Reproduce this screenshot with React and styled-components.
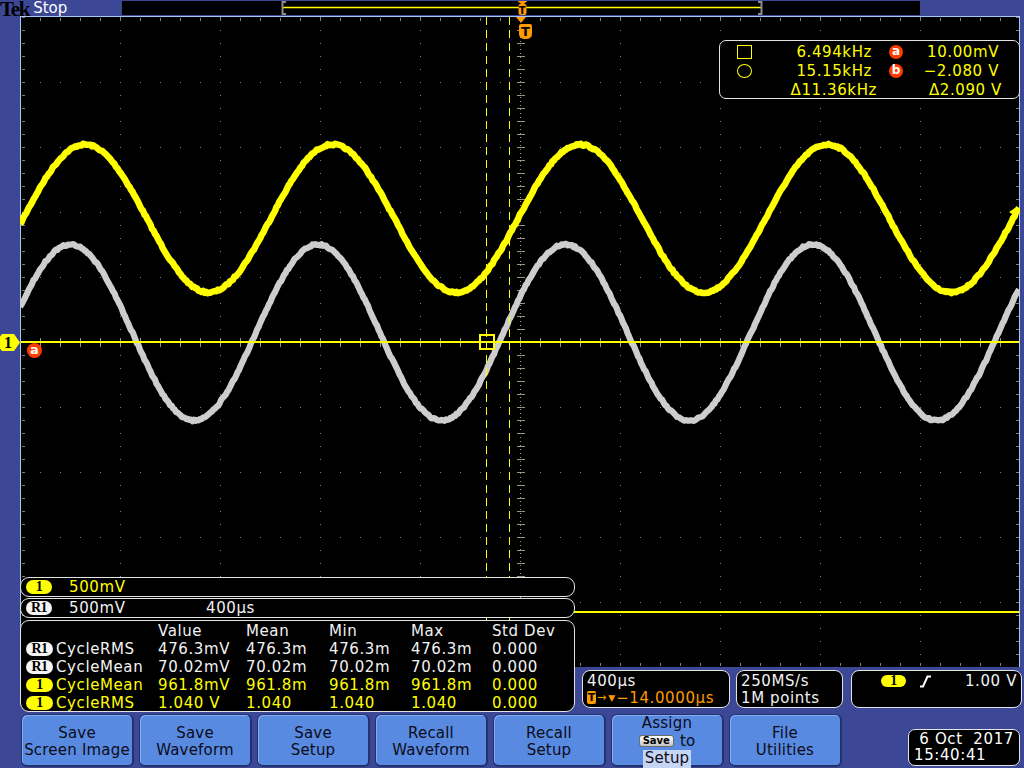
import React from 'react';
import styled, { createGlobalStyle } from 'styled-components';

const C = {
  bg: '#3c4896',
  frame: '#a8c8f4',
  yellow: '#ffff00',
  orange: '#ff9a00',
  red: '#ff3c00',
  white: '#f2f2f2',
  border: '#e4e4e4',
  btn: '#588ae2',
  grid: '#808080',
  axis: '#9b927e',
};

const GlobalStyle = createGlobalStyle`
  html, body { margin: 0; padding: 0; background: ${C.bg}; }
  body { width: 1024px; height: 768px; overflow: hidden; }
  *, *::before, *::after { box-sizing: border-box; }
`;

const Scope = styled.div`
  position: relative;
  width: 1024px;
  height: 768px;
  background: ${C.bg};
  display: grid;
  grid-template-columns: 20px 1000px 4px;
  grid-template-rows: 16px 561px 90px 46px 55px;
  font-family: "DejaVu Sans", Verdana, sans-serif;
  font-size: 15px;
  letter-spacing: 0.6px;
  color: ${C.white};
`;

/* ---------- top bar ---------- */
const TopBar = styled.header`
  grid-column: 1 / -1;
  grid-row: 1;
  display: flex;
  align-items: flex-start;
`;
const Brand = styled.div`
  width: 122px;
  height: 16px;
  display: flex;
  align-items: flex-end;
  gap: 4px;
`;
const TekLogo = styled.span`
  display: block;
  font-family: "Liberation Serif", "DejaVu Serif", serif;
  font-weight: 700;
  font-size: 21px;
  letter-spacing: -1.3px;
  color: #000;
  line-height: 16px;
  height: 16px;
  padding-top: 1px;
`;
const RunState = styled.span`
  display: block;
  color: #fff;
  font-size: 15px;
  letter-spacing: 0;
  line-height: 16px;
`;
const RecordView = styled.div`
  width: 798px;
  height: 14px;
  margin-top: 1px;
  background: #000;
  svg { display: block; }
`;

/* ---------- graticule ---------- */
const GraticuleCell = styled.div`
  grid-column: 2;
  grid-row: 2 / 4;
  background: #000;
  svg { display: block; }
`;

/* ---------- cursor readout ---------- */
const Readout = styled.div`
  grid-column: 2;
  grid-row: 2;
  justify-self: end;
  align-self: start;
  margin-top: 24px;
  width: 301px;
  height: 59px;
  background: #000;
  border: 1px solid ${C.border};
  border-radius: 7px;
  padding: 1px 0 0 17px;
  display: grid;
  grid-template-columns: 16px 119px 17px 15px 95px;
  grid-auto-rows: 19px;
  align-items: center;
  color: ${C.yellow};
  white-space: nowrap;
`;
const ReadVal = styled.span`
  text-align: right;
  margin-right: ${p => p.$nudge || 0}px;
`;
const SquareSym = styled.span`
  display: block;
  width: 15px;
  height: 14px;
  border: 1.5px solid ${C.yellow};
`;
const CircleSym = styled.span`
  display: block;
  width: 15px;
  height: 14px;
  border: 1.5px solid ${C.yellow};
  border-radius: 50%;
`;
const CursorBadge = styled.span`
  display: flex;
  align-items: center;
  justify-content: center;
  width: 14px;
  height: 14px;
  border-radius: 50%;
  background: ${C.red};
  color: #fff;
  font-weight: 700;
  font-size: 12px;
  letter-spacing: 0;
  line-height: 14px;
  padding-bottom: 1px;
`;

/* ---------- lower left panels ---------- */
const LowerLeft = styled.div`
  grid-column: 2;
  grid-row: 3 / 5;
  width: 555px;
  display: flex;
  flex-direction: column;
  position: relative;
`;
const ChannelBar = styled.div`
  height: 20px;
  background: #000;
  border: 1px solid ${C.border};
  border-radius: 9px;
  display: flex;
  align-items: center;
  padding-left: 5px;
  color: ${p => p.$color};
  & + & { margin-top: 1px; }
`;
const ChanBadge = styled.span`
  flex: none;
  display: inline-flex;
  align-items: center;
  justify-content: center;
  width: ${p => p.$w || 26}px;
  height: ${p => p.$h || 14}px;
  border-radius: 7px;
  background: ${p => (p.$ref ? '#f4f4f4' : C.yellow)};
  color: #000;
  font-family: "Liberation Serif", "DejaVu Serif", serif;
  font-weight: 700;
  font-size: 14px;
  letter-spacing: -0.5px;
  line-height: 14px;
`;
const BarValue = styled.span`
  width: ${p => p.$w}px;
  margin-left: ${p => p.$ml || 0}px;
  flex: none;
`;
const MeasTable = styled.div`
  margin-top: 2px;
  height: 92px;
  background: #000;
  border: 1px solid ${C.border};
  border-radius: 9px;
  padding: 1px 0 0 5px;
  display: grid;
  grid-template-columns: 132px 88px 83px 82px 81px 1fr;
  grid-auto-rows: 18px;
  align-items: center;
  white-space: nowrap;
`;
const Cell = styled.div`
  color: ${p => p.$color || C.white};
  display: flex;
  align-items: center;
  gap: 3px;
`;

/* ---------- status boxes ---------- */
const StatusRow = styled.div`
  grid-column: 2 / 4;
  grid-row: 4;
  justify-self: end;
  display: flex;
  gap: 6px;
  padding: 3px 2px 0 0;
`;
const StatusBox = styled.div`
  width: ${p => p.$w}px;
  height: 38px;
  margin-left: ${p => p.$ml || 0}px;
  background: #000;
  border: 1px solid ${C.border};
  border-radius: 8px;
  padding: 2px 4px 0 4px;
  line-height: 16.5px;
  white-space: nowrap;
`;
const StatusLine = styled.div`
  display: flex;
  align-items: center;
  height: 16.5px;
  color: ${p => p.$color || C.white};
  padding-left: ${p => p.$pl || 0}px;
`;
const TrigT = styled.span`
  display: inline-flex;
  align-items: center;
  justify-content: center;
  width: 9px;
  height: 13px;
  border-radius: 2px;
  background: ${C.orange};
  color: #000;
  font-weight: 700;
  font-size: 11px;
  letter-spacing: 0;
`;
const SmallGlyph = styled.span`
  font-size: ${p => p.$size}px;
  letter-spacing: 0;
  margin: 0 1px;
`;
const PushRight = styled.span`
  margin-left: auto;
`;
const EdgeIcon = styled.svg`
  margin-left: 13px;
  flex: none;
`;

/* ---------- soft keys ---------- */
const SoftKeys = styled.div`
  grid-column: 1 / -1;
  grid-row: 5;
  display: flex;
  align-items: flex-start;
  gap: 5px;
  padding: 1px 4px 0 21px;
`;
const SoftKey = styled.div`
  width: 113px;
  height: 53px;
  flex: none;
  background: ${C.btn};
  border: 1px solid #22326e;
  border-right-width: 2px;
  border-bottom-width: 2px;
  border-radius: 6px;
  box-shadow: inset 1px 1px 0 #86acf0;
  display: flex;
  flex-direction: column;
  align-items: center;
  justify-content: center;
  padding-top: ${p => (p.$three ? 3 : 4)}px;
  color: #0c0c16;
  font-size: 15px;
  letter-spacing: 0.2px;
  line-height: 17.5px;
  text-align: center;
  white-space: nowrap;
`;
const SaveChip = styled.span`
  display: inline-block;
  height: 12px;
  padding: 0 3px;
  margin-right: 6px;
  border: 1px solid #6d6d6d;
  border-radius: 3px;
  background: linear-gradient(#ffffff, #c4c4c4);
  color: #000;
  font-size: 10px;
  font-weight: 700;
  line-height: 10px;
  letter-spacing: 0;
  vertical-align: 2px;
`;
const Highlight = styled.span`
  background: #c6d5f4;
  padding: 0 2px;
`;
const DateBox = styled.div`
  margin-left: auto;
  margin-top: 15px;
  width: 112px;
  height: 37px;
  background: #000;
  border: 1px solid ${C.border};
  border-radius: 7px;
  padding: 1px 0 0 5px;
  color: #fff;
  line-height: 16px;
  white-space: pre;
`;

/* ---------- overlays on graticule ---------- */
const ChannelMarker = styled.div`
  position: absolute;
  left: 0;
  top: 334px;
  width: 20px;
  height: 17px;
  background: ${C.yellow};
  clip-path: polygon(2px 0, 14px 0, 20px 50%, 14px 100%, 2px 100%, 0 85%, 0 15%);
  color: #000;
  font-family: "Liberation Serif", serif;
  font-weight: 700;
  font-size: 16px;
  line-height: 17px;
  padding-left: 4px;
  letter-spacing: 0;
`;
const CursorTag = styled.div`
  position: absolute;
  left: 27px;
  top: 343px;
  width: 15px;
  height: 15px;
  border-radius: 50%;
  background: ${C.red};
  color: #fff;
  font-weight: 700;
  font-size: 13px;
  line-height: 14px;
  text-align: center;
  letter-spacing: 0;
`;
const TriggerMark = styled.div`
  position: absolute;
  left: 516px;
  top: 17px;
  display: flex;
  flex-direction: column;
  align-items: flex-start;
`;
const TriggerArrow = styled.span`
  width: 0;
  height: 0;
  border-left: 5.5px solid transparent;
  border-right: 5.5px solid transparent;
  border-top: 6px solid ${C.orange};
`;
const TriggerBadge = styled.span`
  margin-top: 1px;
  margin-left: 3px;
  width: 13px;
  height: 15px;
  border-radius: 2px 2px 5px 5px;
  background: ${C.orange};
  color: #000;
  font-weight: 700;
  font-size: 13px;
  line-height: 15px;
  text-align: center;
  letter-spacing: 0;
`;

/* ---------- drawing helpers ---------- */
function wave(cy, amp, peakX, period, seed) {
  let s = seed;
  const rnd = () => {
    s = (s * 16807) % 2147483647;
    return s / 2147483647;
  };
  let d = '';
  for (let x = 0; x <= 1000; x += 1.5) {
    const y = cy - amp * Math.cos((2 * Math.PI * (x - peakX)) / period) + (rnd() - 0.5) * 1.8;
    d += (x === 0 ? 'M' : 'L') + x.toFixed(1) + ' ' + y.toFixed(2);
  }
  return d;
}

const VLINES = [100, 200, 300, 400, 600, 700, 800, 900];
const HLINES = [66, 131, 196, 261, 391, 456, 521, 586];
const YTICKS = Array.from({ length: 51 }, (_, k) => 1 + 13 * k);
const XTICKS = Array.from({ length: 51 }, (_, k) => 20 * k);

function Graticule() {
  const yellow = wave(202.5, 74, 65, 247.5, 7);
  const gray = wave(316.5, 88, 298, 247.5, 13);
  return (
    <svg width="1000" height="651" viewBox="0 0 1000 651">
      <g shapeRendering="crispEdges">
        {VLINES.map(x => (
          <line key={'v' + x} x1={x + 0.5} x2={x + 0.5} y1={1} y2={651} stroke={C.grid} strokeDasharray="1 12" />
        ))}
        {HLINES.map(y => (
          <line key={'h' + y} x1={0} x2={1000} y1={y + 0.5} y2={y + 0.5} stroke={C.grid} strokeDasharray="1 19" />
        ))}
        <line x1={3} x2={3} y1={1} y2={651} stroke={C.grid} strokeWidth="3" strokeDasharray="1 12" />
        <line x1={997} x2={997} y1={1} y2={651} stroke={C.grid} strokeWidth="3" strokeDasharray="1 12" />
        <line x1={0} x2={1000} y1={3} y2={3} stroke={C.grid} strokeWidth="3" strokeDasharray="1 19" />
        <line x1={0} x2={1000} y1={648} y2={648} stroke={C.grid} strokeWidth="3" strokeDasharray="1 19" />
        <line x1={500.5} x2={500.5} y1={1} y2={651} stroke={C.axis} strokeDasharray="1 3" />
        <line x1={0} x2={1000} y1={326.5} y2={326.5} stroke={C.axis} strokeDasharray="1 3" />
        {YTICKS.map(y => (
          <line key={'yt' + y} x1={497} x2={505} y1={y + 0.5} y2={y + 0.5} stroke={C.axis} />
        ))}
        {XTICKS.map(x => (
          <line key={'xt' + x} x1={x + 0.5} x2={x + 0.5} y1={322} y2={331} stroke={C.axis} />
        ))}
        <line x1={0.5} x2={0.5} y1={0} y2={651} stroke={C.frame} />
        <line x1={0} x2={1000} y1={0.5} y2={0.5} stroke={C.frame} />
        <line x1={999.5} x2={999.5} y1={0} y2={651} stroke={C.frame} />
      </g>

      <path d={gray} fill="none" stroke="#cdcdcd" strokeWidth="6.2" strokeLinejoin="round" />
      <path d={yellow} fill="none" stroke={C.yellow} strokeWidth="6.5" strokeLinejoin="round" />

      <g shapeRendering="crispEdges">
        <line x1={466.5} x2={466.5} y1={1} y2={651} stroke={C.yellow} strokeWidth="1.5" strokeDasharray="8 5" />
        <line x1={489.5} x2={489.5} y1={1} y2={651} stroke={C.yellow} strokeWidth="1.5" strokeDasharray="8 5" />
        <line x1={1} x2={999} y1={326} y2={326} stroke={C.yellow} strokeWidth="2" />
        <line x1={1} x2={999} y1={596} y2={596} stroke={C.yellow} strokeWidth="1.5" />
        <rect x={460} y={319} width={14} height={14} fill="none" stroke={C.yellow} strokeWidth="2" />
      </g>

      <path d="M989 196 L995 192 L995 200 Z" fill={C.yellow} />
      <line x1={994} x2={999} y1={196} y2={196} stroke={C.yellow} strokeWidth="2" />
    </svg>
  );
}

function RecordBar() {
  return (
    <RecordView>
      <svg width="798" height="14" viewBox="0 0 798 14">
        <line x1={161} x2={639} y1={6.5} y2={6.5} stroke={C.yellow} strokeWidth="1.5" />
        <path d="M164 1 H160.5 V13 H164" fill="none" stroke="#8c8c8c" strokeWidth="2" />
        <path d="M636 1 H639.5 V13 H636" fill="none" stroke="#8c8c8c" strokeWidth="2" />
        <path d="M395.5 0 H405.5 L400.5 4 Z" fill={C.orange} />
        <rect x={396.5} y={3} width={8} height={11} rx={2} fill={C.orange} />
        <text x={400.5} y={12.5} fontSize="10" fontWeight="700" textAnchor="middle" fill="#000" fontFamily="DejaVu Sans">
          T
        </text>
      </svg>
    </RecordView>
  );
}

const MEAS = [
  { ref: true, label: 'CycleRMS', vals: ['476.3mV', '476.3m', '476.3m', '476.3m', '0.000'] },
  { ref: true, label: 'CycleMean', vals: ['70.02mV', '70.02m', '70.02m', '70.02m', '0.000'] },
  { ref: false, label: 'CycleMean', vals: ['961.8mV', '961.8m', '961.8m', '961.8m', '0.000'] },
  { ref: false, label: 'CycleRMS', vals: ['1.040 V', '1.040', '1.040', '1.040', '0.000'] },
];

const KEYS = [
  ['Save', 'Screen Image'],
  ['Save', 'Waveform'],
  ['Save', 'Setup'],
  ['Recall', 'Waveform'],
  ['Recall', 'Setup'],
];

export default function App() {
  return (
    <>
      <GlobalStyle />
      <Scope>
        <TopBar>
          <Brand>
            <TekLogo>Tek</TekLogo>
            <RunState>Stop</RunState>
          </Brand>
          <RecordBar />
        </TopBar>

        <GraticuleCell>
          <Graticule />
        </GraticuleCell>

        <Readout>
          <SquareSym />
          <ReadVal>6.494kHz</ReadVal>
          <span />
          <CursorBadge>a</CursorBadge>
          <ReadVal>10.00mV</ReadVal>

          <CircleSym />
          <ReadVal>15.15kHz</ReadVal>
          <span />
          <CursorBadge>b</CursorBadge>
          <ReadVal>−2.080 V</ReadVal>

          <span />
          <ReadVal $nudge={-5}>Δ11.36kHz</ReadVal>
          <span />
          <span />
          <ReadVal $nudge={-3}>Δ2.090 V</ReadVal>
        </Readout>

        <LowerLeft>
          <ChannelBar $color={C.yellow}>
            <ChanBadge>1</ChanBadge>
            <BarValue $w={137} $ml={17}>500mV</BarValue>
          </ChannelBar>
          <ChannelBar $color={C.white}>
            <ChanBadge $ref>R1</ChanBadge>
            <BarValue $w={137} $ml={17}>500mV</BarValue>
            <BarValue $w={100}>400µs</BarValue>
          </ChannelBar>
          <MeasTable>
            <Cell />
            <Cell>Value</Cell>
            <Cell>Mean</Cell>
            <Cell>Min</Cell>
            <Cell>Max</Cell>
            <Cell>Std Dev</Cell>
            {MEAS.map((m, i) => {
              const color = m.ref ? C.white : C.yellow;
              return (
                <React.Fragment key={i}>
                  <Cell $color={color}>
                    <ChanBadge $ref={m.ref} $w={27}>{m.ref ? 'R1' : '1'}</ChanBadge>
                    {m.label}
                  </Cell>
                  {m.vals.map((v, j) => (
                    <Cell key={j} $color={color}>{v}</Cell>
                  ))}
                </React.Fragment>
              );
            })}
          </MeasTable>
        </LowerLeft>

        <StatusRow>
          <StatusBox $w={148}>
            <StatusLine>400µs</StatusLine>
            <StatusLine $color={C.orange}>
              <TrigT>T</TrigT>
              <SmallGlyph $size={11}>→</SmallGlyph>
              <SmallGlyph $size={9}>▼</SmallGlyph>
              −14.0000µs
            </StatusLine>
          </StatusBox>
          <StatusBox $w={107}>
            <StatusLine>250MS/s</StatusLine>
            <StatusLine>1M points</StatusLine>
          </StatusBox>
          <StatusBox $w={171} $ml={2}>
            <StatusLine $pl={25}>
              <ChanBadge $w={25} $h={12}>1</ChanBadge>
              <EdgeIcon width="13" height="13" viewBox="0 0 13 13">
                <path d="M1 11.5 H4 L8.5 1.5 H12" fill="none" stroke="#fff" strokeWidth="2" />
              </EdgeIcon>
              <PushRight>1.00 V</PushRight>
            </StatusLine>
          </StatusBox>
        </StatusRow>

        <SoftKeys>
          {KEYS.map(([a, b], i) => (
            <SoftKey key={i}>
              <span>{a}</span>
              <span>{b}</span>
            </SoftKey>
          ))}
          <SoftKey $three>
            <span>Assign</span>
            <span>
              <SaveChip>Save</SaveChip>to
            </span>
            <Highlight>Setup</Highlight>
          </SoftKey>
          <SoftKey>
            <span>File</span>
            <span>Utilities</span>
          </SoftKey>
          <DateBox>{' 6 Oct  2017\n15:40:41'}</DateBox>
        </SoftKeys>

        <ChannelMarker>1</ChannelMarker>
        <CursorTag>a</CursorTag>
        <TriggerMark>
          <TriggerArrow />
          <TriggerBadge>T</TriggerBadge>
        </TriggerMark>
      </Scope>
    </>
  );
}
